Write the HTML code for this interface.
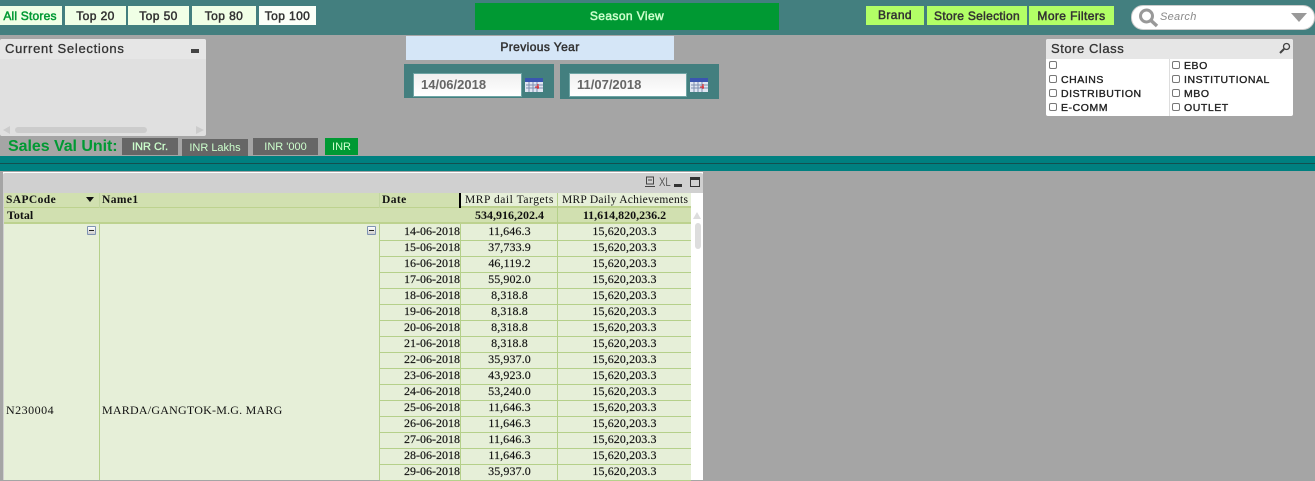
<!DOCTYPE html>
<html><head><meta charset="utf-8"><title>Dashboard</title>
<style>
html,body{margin:0;padding:0;width:1315px;height:480px;overflow:hidden;background:#a5a5a5;font-family:"Liberation Sans",sans-serif}
.a{position:absolute;box-sizing:border-box;white-space:nowrap}
.b{text-align:center;font-size:12px;color:#333;line-height:20px;letter-spacing:.4px;-webkit-text-stroke:.5px currentColor}
.u{text-align:center;font-size:11px;color:#ccffcc;background:#666;line-height:19px}
.s{font-family:"Liberation Serif",serif;color:#111}
.l{font-size:10.5px;color:#222;letter-spacing:.55px;line-height:14px;-webkit-text-stroke:.35px currentColor}
.c{width:8px;height:8px;border:1px solid #777;border-radius:2px;background:#fff}
.r{left:380px;width:311px;height:17px;border-bottom:1px solid #b5d08a;font-size:12px;line-height:15px;letter-spacing:.1px;-webkit-text-stroke:.15px #111}
.r span{position:absolute;top:0;text-align:center}
.r .d{left:0;width:80px;text-align:right;letter-spacing:0}
.r .t{left:81px;width:97px}
.r .m{left:178px;width:133px}
.r i{position:absolute;top:0;width:1px;height:17px;background:#b5d08a}
.x{width:9px;height:9px;background:linear-gradient(#fff,#ccc);border:1px solid #7f93b2;border-radius:1px}
.x:after{content:"";position:absolute;left:1px;top:3px;width:5px;height:1px;background:#222}
</style></head><body>
<div class="a" style="left:0;top:0;width:1315px;height:35px;background:#437f7f"></div>
<div class="a b" style="left:0;top:6px;width:60px;height:19px;background:#f0ffe6;color:#009933;letter-spacing:.2px">All Stores</div>
<div class="a" style="left:60px;top:6px;width:2px;height:19px;background:#f0ffe6"></div>
<div class="a b" style="left:65px;top:6px;width:61px;height:19px;background:#f0ffe6">Top 20</div>
<div class="a b" style="left:128px;top:6px;width:61px;height:19px;background:#f0ffe6">Top 50</div>
<div class="a b" style="left:192px;top:6px;width:64px;height:19px;background:#f0ffe6">Top 80</div>
<div class="a b" style="left:259px;top:6px;width:57px;height:19px;background:#fbfff8">Top 100</div>
<div class="a b" style="left:475px;top:3px;width:304px;height:27px;background:#009933;color:#ccffcc;line-height:27px">Season View</div>
<div class="a b" style="left:866px;top:6px;width:58px;height:19px;background:#b2ff66;line-height:18px">Brand</div>
<div class="a b" style="left:927px;top:6px;width:100px;height:19px;background:#b2ff66;letter-spacing:.3px">Store Selection</div>
<div class="a b" style="left:1029px;top:6px;width:85px;height:19px;background:#b2ff66">More Filters</div>
<div class="a" style="left:1131px;top:5px;width:184px;height:25px;background:#fff;border-radius:12px;border:1px solid #ccc"></div>
<svg class="a" style="left:1137px;top:7px" width="24" height="22" viewBox="0 0 24 22"><circle cx="9.5" cy="9" r="6" fill="none" stroke="#999" stroke-width="3"/><path d="M14 13.500L20 19" stroke="#999" stroke-width="3.500"/></svg>
<div class="a" style="left:1160px;top:10px;font-size:11px;font-style:italic;color:#888;line-height:15px;letter-spacing:.3px">Search</div>
<svg class="a" style="left:1291px;top:13px" width="17" height="10"><path d="M0 0H16L8 9Z" fill="#999"/></svg>

<div class="a" style="left:0;top:39px;width:206px;height:97px;background:#e0e0e0;border-radius:2px"></div>
<div class="a" style="left:0;top:39px;width:206px;height:20px;background:#e6e6e6;border-radius:2px 2px 0 0"></div>
<div class="a" style="left:5px;top:41px;font-size:13px;color:#333;line-height:16px;letter-spacing:.7px;-webkit-text-stroke:.3px #333">Current Selections</div>
<div class="a" style="left:191px;top:49px;width:8px;height:4px;background:#444"></div>
<div class="a" style="left:15px;top:127px;width:132px;height:6px;background:#ccc;border-radius:3px"></div>
<svg class="a" style="left:3px;top:126px" width="8" height="8"><path d="M7 0V8L0 4Z" fill="#ccc"/></svg>
<svg class="a" style="left:196px;top:126px" width="8" height="8"><path d="M0 0V8L8 4Z" fill="#ccc"/></svg>

<div class="a" style="left:406px;top:36px;width:268px;height:24px;background:#d5e6f7;text-align:center;font-size:12px;color:#333;line-height:23px;letter-spacing:.4px;-webkit-text-stroke:.5px #333">Previous Year</div>
<div class="a" style="left:404px;top:64px;width:150px;height:34px;background:#437f7f"></div>
<div class="a" style="left:560px;top:64px;width:159px;height:35px;background:#437f7f"></div>
<div class="a" style="left:413px;top:73px;width:109px;height:24px;border:1px solid #6fa5a5;background:linear-gradient(#f0f0f0,#fff);font-size:13px;font-weight:bold;color:#666;line-height:22px;padding-left:7px">14/06/2018</div>
<div class="a" style="left:569px;top:73px;width:118px;height:24px;border:1px solid #6fa5a5;background:linear-gradient(#f0f0f0,#fff);font-size:13px;font-weight:bold;color:#666;line-height:22px;padding-left:7px">11/07/2018</div>
<svg class="a" style="left:525px;top:78px" width="19" height="15"><rect width="18" height="14" fill="#dfe6f2"/><rect width="18" height="4" fill="#3a55b0"/><path d="M1 7H18M1 10H18M4 4V14M8 4V14M12 4V14" stroke="#7f8fb0"/><path d="M10 9H14M13 6V11" stroke="#e22"/></svg>
<svg class="a" style="left:690px;top:78px" width="19" height="15"><rect width="18" height="14" fill="#dfe6f2"/><rect width="18" height="4" fill="#3a55b0"/><path d="M1 7H18M1 10H18M4 4V14M8 4V14M12 4V14" stroke="#7f8fb0"/><path d="M10 9H14M13 6V11" stroke="#e22"/></svg>

<div class="a" style="left:1046px;top:39px;width:247px;height:77px;background:#fff;border-radius:2px"></div>
<div class="a" style="left:1046px;top:39px;width:247px;height:20px;background:#e6e6e6;border-radius:2px 2px 0 0"></div>
<div class="a" style="left:1051px;top:41px;font-size:13px;color:#333;line-height:16px;letter-spacing:.55px;-webkit-text-stroke:.3px #333">Store Class</div>
<svg class="a" style="left:1279px;top:42px" width="12" height="12"><circle cx="7.500" cy="4.500" r="3" fill="none" stroke="#444" stroke-width="1.300"/><path d="M5 7L1 11" stroke="#444" stroke-width="2"/></svg>
<div class="a" style="left:1169px;top:59px;width:1px;height:57px;background:#ddd"></div>
<div class="a c" style="left:1049px;top:61px"></div><div class="a c" style="left:1172px;top:61px"></div>
<div class="a c" style="left:1049px;top:75px"></div><div class="a c" style="left:1172px;top:75px"></div>
<div class="a c" style="left:1049px;top:89px"></div><div class="a c" style="left:1172px;top:89px"></div>
<div class="a c" style="left:1049px;top:103px"></div><div class="a c" style="left:1172px;top:103px"></div>
<div class="a l" style="left:1184px;top:59px">EBO</div>
<div class="a l" style="left:1061px;top:73px">CHAINS</div><div class="a l" style="left:1184px;top:73px">INSTITUTIONAL</div>
<div class="a l" style="left:1061px;top:87px">DISTRIBUTION</div><div class="a l" style="left:1184px;top:87px">MBO</div>
<div class="a l" style="left:1061px;top:101px">E-COMM</div><div class="a l" style="left:1184px;top:101px">OUTLET</div>

<div class="a" style="left:8px;top:138px;font-size:16px;font-weight:bold;color:#009933;line-height:18px;letter-spacing:-.05px">Sales Val Unit:</div>
<div class="a u" style="left:122px;top:138px;width:56px;height:17px;-webkit-text-stroke:.3px #ccffcc">INR Cr.</div>
<div class="a u" style="left:182px;top:139px;width:66px;height:17px;line-height:19px">INR Lakhs</div>
<div class="a u" style="left:253px;top:138px;width:65px;height:17px">INR '000</div>
<div class="a u" style="left:325px;top:138px;width:33px;height:17px;background:#009933">INR</div>

<div class="a" style="left:0;top:156px;width:1315px;height:15px;background:#008080"></div>
<div class="a" style="left:0;top:163px;width:1315px;height:1px;background:#135050"></div>

<div class="a" style="left:3px;top:172px;width:700px;height:308px;background:#fff"></div>
<div class="a" style="left:3px;top:173px;width:700px;height:20px;background:#d0d0d0;border-radius:2px 2px 0 0"></div>
<div class="a" style="left:3px;top:193px;width:1px;height:287px;background:#d0d0d0"></div>
<svg class="a" style="left:644px;top:176px" width="12" height="12"><path d="M2.500 1H9.500V8H2.500ZM1 10.500H11M4 4H8" fill="none" stroke="#444"/></svg>
<div class="a" style="left:659px;top:175px;font-size:12px;color:#555;line-height:14px;transform:scaleX(.8);transform-origin:left">XL</div>
<div class="a" style="left:674px;top:184px;width:8px;height:3px;background:#333"></div>
<div class="a" style="left:690px;top:177px;width:10px;height:10px;border:1px solid #333;border-top-width:3px"></div>

<div class="a" style="left:4px;top:193px;width:687px;height:15px;background:#d1e0b0;border-bottom:1px solid #bdd28f"></div>
<div class="a" style="left:4px;top:208px;width:457px;height:16px;background:#d1e0b0;border-bottom:2px solid #bdd28f"></div>
<div class="a" style="left:461px;top:193px;width:230px;height:15px;background:#e6efd8;border-bottom:2px solid #bdd28f"></div>
<div class="a" style="left:461px;top:208px;width:230px;height:16px;background:#d1e0b0;border-bottom:2px solid #bdd28f"></div>
<div class="a" style="left:99px;top:193px;width:1px;height:15px;background:#c2d6a0"></div>
<div class="a" style="left:379px;top:193px;width:1px;height:15px;background:#c2d6a0"></div>
<div class="a" style="left:459px;top:193px;width:2px;height:15px;background:#000"></div>
<div class="a" style="left:557px;top:193px;width:1px;height:31px;background:#b5d08a"></div>
<div class="a s" style="left:6px;top:193px;font-size:11.5px;font-weight:bold;line-height:14px;letter-spacing:.4px">SAPCode</div>
<svg class="a" style="left:86px;top:197px" width="9" height="6"><path d="M0 0H8L4 5Z" fill="#111"/></svg>
<div class="a s" style="left:102px;top:193px;font-size:11.5px;font-weight:bold;line-height:14px;letter-spacing:.4px">Name1</div>
<div class="a s" style="left:382px;top:193px;font-size:11.5px;font-weight:bold;line-height:14px;letter-spacing:.4px">Date</div>
<div class="a s" style="left:465px;top:193px;font-size:11.5px;line-height:14px;letter-spacing:.55px">MRP dail Targets</div>
<div class="a s" style="left:562px;top:193px;font-size:11.5px;line-height:14px;letter-spacing:.27px">MRP Daily Achievements</div>
<div class="a s" style="left:7px;top:208px;font-size:12px;font-weight:bold;line-height:15px">Total</div>
<div class="a s" style="left:461px;top:208px;width:97px;text-align:center;font-size:12px;font-weight:bold;line-height:15px">534,916,202.4</div>
<div class="a s" style="left:558px;top:208px;width:133px;text-align:center;font-size:12px;font-weight:bold;line-height:15px">11,614,820,236.2</div>

<div class="a" style="left:4px;top:224px;width:687px;height:256px;background:#e6efd8"></div>
<div class="a" style="left:99px;top:224px;width:1px;height:256px;background:#b5d08a"></div>
<div class="a" style="left:379px;top:224px;width:1px;height:256px;background:#b5d08a"></div>
<div class="a x" style="left:87px;top:226px"></div>
<div class="a x" style="left:367px;top:226px"></div>
<div class="a s" style="left:6px;top:403px;font-size:12px;line-height:15px;letter-spacing:.5px">N230004</div>
<div class="a s" style="left:102px;top:403px;font-size:12px;line-height:15px;letter-spacing:.22px">MARDA/GANGTOK-M.G. MARG</div>

<div class="a r s" style="top:224px"><span class="d">14-06-2018</span><span class="t">11,646.3</span><span class="m">15,620,203.3</span><i style="left:80px"></i><i style="left:177px"></i></div>
<div class="a r s" style="top:240px"><span class="d">15-06-2018</span><span class="t">37,733.9</span><span class="m">15,620,203.3</span><i style="left:80px"></i><i style="left:177px"></i></div>
<div class="a r s" style="top:256px"><span class="d">16-06-2018</span><span class="t">46,119.2</span><span class="m">15,620,203.3</span><i style="left:80px"></i><i style="left:177px"></i></div>
<div class="a r s" style="top:272px"><span class="d">17-06-2018</span><span class="t">55,902.0</span><span class="m">15,620,203.3</span><i style="left:80px"></i><i style="left:177px"></i></div>
<div class="a r s" style="top:288px"><span class="d">18-06-2018</span><span class="t">8,318.8</span><span class="m">15,620,203.3</span><i style="left:80px"></i><i style="left:177px"></i></div>
<div class="a r s" style="top:304px"><span class="d">19-06-2018</span><span class="t">8,318.8</span><span class="m">15,620,203.3</span><i style="left:80px"></i><i style="left:177px"></i></div>
<div class="a r s" style="top:320px"><span class="d">20-06-2018</span><span class="t">8,318.8</span><span class="m">15,620,203.3</span><i style="left:80px"></i><i style="left:177px"></i></div>
<div class="a r s" style="top:336px"><span class="d">21-06-2018</span><span class="t">8,318.8</span><span class="m">15,620,203.3</span><i style="left:80px"></i><i style="left:177px"></i></div>
<div class="a r s" style="top:352px"><span class="d">22-06-2018</span><span class="t">35,937.0</span><span class="m">15,620,203.3</span><i style="left:80px"></i><i style="left:177px"></i></div>
<div class="a r s" style="top:368px"><span class="d">23-06-2018</span><span class="t">43,923.0</span><span class="m">15,620,203.3</span><i style="left:80px"></i><i style="left:177px"></i></div>
<div class="a r s" style="top:384px"><span class="d">24-06-2018</span><span class="t">53,240.0</span><span class="m">15,620,203.3</span><i style="left:80px"></i><i style="left:177px"></i></div>
<div class="a r s" style="top:400px"><span class="d">25-06-2018</span><span class="t">11,646.3</span><span class="m">15,620,203.3</span><i style="left:80px"></i><i style="left:177px"></i></div>
<div class="a r s" style="top:416px"><span class="d">26-06-2018</span><span class="t">11,646.3</span><span class="m">15,620,203.3</span><i style="left:80px"></i><i style="left:177px"></i></div>
<div class="a r s" style="top:432px"><span class="d">27-06-2018</span><span class="t">11,646.3</span><span class="m">15,620,203.3</span><i style="left:80px"></i><i style="left:177px"></i></div>
<div class="a r s" style="top:448px"><span class="d">28-06-2018</span><span class="t">11,646.3</span><span class="m">15,620,203.3</span><i style="left:80px"></i><i style="left:177px"></i></div>
<div class="a r s" style="top:464px"><span class="d">29-06-2018</span><span class="t">35,937.0</span><span class="m">15,620,203.3</span><i style="left:80px"></i><i style="left:177px"></i></div>

<svg class="a" style="left:693px;top:212px" width="9" height="8"><path d="M0 7H8L4 0Z" fill="#ddd"/></svg>
<div class="a" style="left:695px;top:223px;width:6px;height:26px;background:#ddd;border-radius:3px"></div>
</body></html>
